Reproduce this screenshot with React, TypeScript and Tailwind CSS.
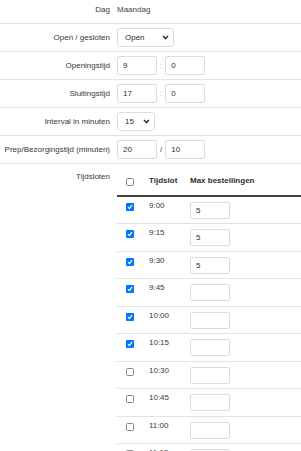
import React from "react";

// ---------------------------------------------------------------------------
// Small building blocks
// ---------------------------------------------------------------------------

function Row({
  label,
  height,
  top,
  children,
}: {
  label: string;
  height: string;
  top?: boolean;
  children: React.ReactNode;
}) {
  return (
    <div
      className={`flex border-b border-[#e3e3e3] ${height} ${
        top ? "items-start pt-[4px]" : "items-center"
      }`}
    >
      <div className="w-[110px] shrink-0 text-right leading-[12px] text-[#383838]">
        {label}
      </div>
      <div className="ml-[7px] flex items-center">{children}</div>
    </div>
  );
}

function TextBox({ value, w = "w-[40px]", h = "h-[19px]" }: { value?: string; w?: string; h?: string }) {
  return (
    <div
      className={`${w} ${h} flex items-center rounded-[2px] border border-[#dcdcdc] bg-white pl-[5px] text-[#2e2e2e]`}
    >
      {value}
    </div>
  );
}

function Chevron() {
  return (
    <svg width="7" height="5" viewBox="0 0 7 5" className="shrink-0">
      <polyline points="1,1 3.5,3.6 6,1" fill="none" stroke="#333" strokeWidth="1.5" />
    </svg>
  );
}

function SelectBox({ value, w }: { value: string; w: string }) {
  return (
    <div
      className={`${w} flex h-[19px] items-center justify-between rounded-[3px] border border-[#dcdcdc] bg-white pl-[7px] pr-[4px] text-[#2e2e2e]`}
    >
      <span>{value}</span>
      <Chevron />
    </div>
  );
}

function Check({ checked }: { checked?: boolean }) {
  if (checked) {
    return (
      <span className="flex h-[8px] w-[8px] items-center justify-center rounded-[1px] bg-[#0075ff]">
        <svg width="6" height="6" viewBox="0 0 6 6">
          <polyline points="1,3.2 2.4,4.6 5,1.2" fill="none" stroke="#fff" strokeWidth="1.2" />
        </svg>
      </span>
    );
  }
  return <span className="block h-[8px] w-[8px] rounded-[1.5px] border border-[#858585] bg-white" />;
}

// ---------------------------------------------------------------------------
// Data
// ---------------------------------------------------------------------------

const slots = [
  { time: "9:00", checked: true, max: "5" },
  { time: "9:15", checked: true, max: "5" },
  { time: "9:30", checked: true, max: "5" },
  { time: "9:45", checked: true, max: "" },
  { time: "10:00", checked: true, max: "" },
  { time: "10:15", checked: true, max: "" },
  { time: "10:30", checked: false, max: "" },
  { time: "10:45", checked: false, max: "" },
  { time: "11:00", checked: false, max: "" },
  { time: "11:15", checked: false, max: "" },
  { time: "11:30", checked: false, max: "" },
];

// ---------------------------------------------------------------------------
// App
// ---------------------------------------------------------------------------

export default function App() {
  return (
    <div className="h-[451px] w-[301px] overflow-hidden bg-white font-['Liberation_Sans',Arial,sans-serif] text-[8px] leading-[12px] text-[#383838]">
      <Row label="Dag" height="h-[24px]" top>
        <span className="leading-[12px] text-[#444]">Maandag</span>
      </Row>

      <Row label="Open / gesloten" height="h-[28px]">
        <SelectBox value="Open" w="w-[57px]" />
      </Row>

      <Row label="Openingstijd" height="h-[28px]">
        <TextBox value="9" />
        <span className="mx-[3px] text-[#aaa]">:</span>
        <TextBox value="0" />
      </Row>

      <Row label="Sluitingstijd" height="h-[28px]">
        <TextBox value="17" />
        <span className="mx-[3px] text-[#aaa]">:</span>
        <TextBox value="0" />
      </Row>

      <Row label="Interval in minuten" height="h-[28px]">
        <SelectBox value="15" w="w-[38px]" />
      </Row>

      <Row label="Prep/Bezorgingstijd (minuten)" height="h-[28px]">
        <TextBox value="20" />
        <span className="mx-[3px] text-[#383838]">/</span>
        <TextBox value="10" />
      </Row>

      {/* Time slots */}
      <div className="flex items-start">
        <div className="w-[110px] shrink-0 pt-[7px] text-right">Tijdsloten</div>
        <div className="ml-[7px] flex-1">
          <div className="flex h-[33px] items-start border-b-2 border-[#444] pt-[11px] font-bold text-[#2e2e2e]">
            <div className="w-[32px] pl-[9px] pt-[3px]">
              <Check />
            </div>
            <div className="w-[41px]">Tijdslot</div>
            <div>Max bestellingen</div>
          </div>
          {slots.map((s, i) => (
            <div
              key={s.time}
              className={`flex items-start border-b border-[#e3e3e3] ${
                i % 2 === 0 ? "h-[27px]" : "h-[28px]"
              }`}
            >
              <div className="w-[32px] pl-[9px] pt-[6px]">
                <Check checked={s.checked} />
              </div>
              <div className="w-[41px] pt-[3px]">{s.time}</div>
              <div className="pt-[5px]">
                <TextBox value={s.max} h="h-[17px]" />
              </div>
            </div>
          ))}
        </div>
      </div>
    </div>
  );
}
